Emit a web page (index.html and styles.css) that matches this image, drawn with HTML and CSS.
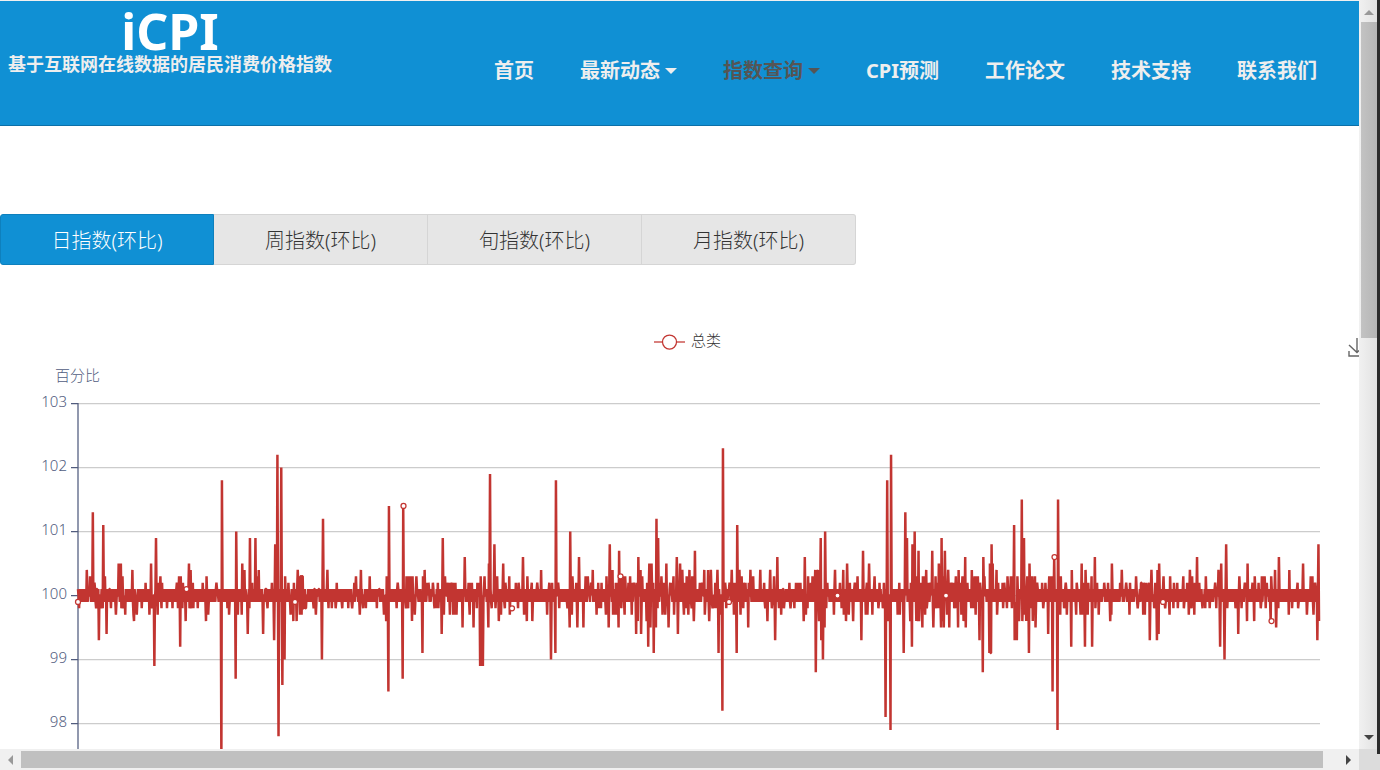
FILE: index.html
```html
<!DOCTYPE html>
<html lang="zh-CN">
<head>
<meta charset="utf-8">
<title>iCPI</title>
<link rel="stylesheet" href="styles.css">
</head>
<body>
<div class="window">
  <main class="page">
    <header class="header">
      <a class="brand" href="#">
        <span class="brand-name">iCPI</span>
        <span class="brand-caption">基于互联网在线数据的居民消费价格指数</span>
      </a>
      <nav class="nav">
        <a href="#">首页</a>
        <a href="#">最新动态<i class="caret"></i></a>
        <a class="current" href="#">指数查询<i class="caret"></i></a>
        <a href="#">CPI预测</a>
        <a href="#">工作论文</a>
        <a href="#">技术支持</a>
        <a href="#">联系我们</a>
      </nav>
    </header>
    <div class="tabs">
      <button class="tab active" type="button">日指数(环比)</button>
      <button class="tab" type="button">周指数(环比)</button>
      <button class="tab" type="button">旬指数(环比)</button>
      <button class="tab" type="button">月指数(环比)</button>
    </div>
    <svg class="chart" viewBox="0 265 1359 500">
      <g class="legend" stroke-width="1.25">
        <path d="M654 342H685"/>
        <circle cx="669.500" cy="342" r="7"/>
        <text x="691" y="346">总类</text>
      </g>
      <path class="download" stroke-width="1.4" d="M1357 338V352M1349 345L1357 352.500L1365 345M1349 351V356H1366V351"/>
      <text class="axis-text" x="55" y="381">百分比</text>
      <path class="grid" stroke-width="1.25" d="M78 403.500H1320M78 467.500H1320M78 531.500H1320M78 595.500H1320M78 659.500H1320M78 723.500H1320"/>
      <path class="axis" stroke-width="1.25" d="M78 403V765M71 403.500H78M71 467.500H78M71 531.500H78M71 595.500H78M71 659.500H78M71 723.500H78"/>
      <g class="axis-text end">
        <text x="67" y="407">103</text>
        <text x="67" y="471">102</text>
        <text x="67" y="535">101</text>
        <text x="67" y="599">100</text>
        <text x="67" y="663">99</text>
        <text x="67" y="727">98</text>
      </g>
      <path class="series" id="series" stroke-width="2.5"/>
      <g class="markers" id="markers" stroke-width="1.25"></g>
    </svg>
  </main>
  <div class="vbar">
    <i class="arrow up"></i>
    <i class="vthumb"></i>
    <i class="arrow down"></i>
  </div>
  <div class="hbar">
    <i class="arrow left"></i>
    <i class="hthumb"></i>
    <i class="arrow right"></i>
  </div>
  <div class="edge"></div>
</div>
<script src="chart.js"></script>
</body>
</html>
```
FILE: styles.css
```css
* {
  box-sizing: border-box;
}

body {
  margin: 0;
  font-family: "Noto Sans", "Noto Sans CJK SC", sans-serif;
  background: #fff;
}

.window {
  display: grid;
  grid-template-columns: minmax(0, 1fr) 18px 3px;
  grid-template-rows: minmax(0, 1fr) 21px;
  height: 100vh;
  overflow: hidden;
  background: #dcdcdc;
}

.page {
  overflow: hidden;
  background: #fff;
  border-top: 1px solid #f0f0f0;
}

.header {
  display: flex;
  justify-content: space-between;
  height: 125px;
  padding: 0 42px 0 8px;
  background: #1090d4;
  border-bottom: 1px solid #0c70a8;
}

.header a {
  color: #eee;
  font-weight: 700;
  text-decoration: none;
}

.brand {
  display: flex;
  flex-direction: column;
  align-items: center;
  padding-top: 8px;
}

.brand .brand-name {
  color: #fff;
  font-size: 50px;
  line-height: 44px;
}

.brand-caption {
  font-size: 18px;
  line-height: 22px;
}

.nav {
  display: flex;
  align-items: flex-start;
  gap: 46px;
  padding-top: 55px;
}

.nav a {
  display: flex;
  align-items: center;
  font-size: 20px;
  line-height: 30px;
  white-space: nowrap;
}

.nav .current {
  color: #555;
}

.caret {
  margin-left: 5px;
  border: 6px solid transparent;
  border-top-color: currentColor;
  border-bottom: 0;
}

.tabs {
  display: grid;
  grid-template-columns: repeat(4, 1fr);
  width: 63%;
  margin-top: 88px;
}

.tab {
  height: 51px;
  padding: 0;
  font: inherit;
  font-size: 20px;
  font-weight: 300;
  color: #333;
  background: #e6e6e6;
  border: 1px solid #d5d5d5;
  border-left-width: 0;
}

.tab:last-child {
  border-radius: 0 3px 3px 0;
}

.tab.active {
  color: #fff;
  background: #1090d4;
  border: 1px solid #0e80bd;
  border-radius: 3px 0 0 3px;
}

.chart {
  display: block;
  width: 100%;
  font-size: 15px;
}

.legend path,
.legend circle {
  fill: #fff;
  stroke: #c23531;
}

.legend text {
  fill: #333;
}

.download {
  fill: none;
  stroke: #666;
}

.axis-text {
  fill: #515c7e;
}

.chart text {
  font-weight: 300;
}

.end {
  text-anchor: end;
}

.grid {
  stroke: #ccc;
}

.axis {
  fill: none;
  stroke: #515c7e;
}

.series {
  fill: none;
  stroke: #c23531;
  stroke-linejoin: bevel;
}

.markers circle {
  fill: #fff;
  stroke: #c23531;
}

.vbar,
.hbar {
  display: flex;
  align-items: center;
  background: #f0f0f0;
}

.vbar {
  flex-direction: column;
  padding: 10px 0 9px 2px;
  background: linear-gradient(90deg, #f1f1f1, #e2e2e2);
}

.vthumb {
  width: 16px;
  flex: 0 0 316px;
  margin: 7px 0 auto;
  background: linear-gradient(90deg, #c3c3c3, #b5b5b5);
}

.hbar {
  grid-row: 2;
  grid-column: 1;
  padding: 0 8px;
}

.hthumb {
  height: 17px;
  flex: 1;
  margin: 0 23px 0 8px;
  background: #c0c0c0;
}

.arrow {
  border: 5px solid transparent;
}

.up {
  border-top: 0;
  border-bottom-color: #999;
}

.down {
  border-bottom: 0;
  border-top-color: #444;
}

.left {
  border-left: 0;
  border-right-color: #999;
}

.right {
  border-right: 0;
  border-left-color: #444;
}

.edge {
  grid-row: 1 / 3;
  grid-column: 3;
  margin-bottom: 16px;
  background: #2b2b2b;
}
```
FILE: chart.js
```js
// Daily index. Pairs are "position:deviation": position in thirds of a unit
// from the segment's origin, deviation from 100 in tenths.
const segments = [
  {origin: 0,
   high: "234:1 261:4 270:3 278:13 284:2 290:1 309:11 314:3 322:1 329:1 335:1 356:5 362:5 367:3 397:4 404:1 421:1 436:2 446:1 454:5 468:9 475:2 481:3 486:2 499:1 510:1 530:2 537:3 543:3 549:2 558:1 567:5 572:4 579:2 595:1 608:2 619:3 632:1 650:2 666:18 685:1 700:1 708:10 715:1 726:5 734:4 750:9 757:2 767:9 772:3 777:4 797:1 815:2 826:8 832:22 843:20 856:3 865:2 882:2 894:4 901:3 907:3",
   low: "238:2 248:1 260:1 288:2 296:7 301:2 308:2 320:6 333:2 347:3 365:2 370:2 376:3 392:1 400:3 404:4 411:3 426:2 449:3 456:2 463:11 473:3 486:2 501:2 517:2 534:2 543:8 549:2 557:4 569:2 575:2 580:2 595:2 620:4 625:3 640:1 664:26 683:2 688:3 707:13 714:3 725:3 744:6 749:2 765:1 790:6 803:2 822:7 836:22 847:14 853:10 871:3 880:4 890:4 905:3 912:2 918:2"},
  {origin: 300,
   high: "4:3 8:3 15:1 42:1 56:1 69:12 83:4 90:1 110:2 163:2 168:3 182:4 203:1 209:3 237:1 260:3 267:14 293:2 309:14 319:3 326:3 333:3 338:3 349:3 361:1 369:3 374:4 382:2 386:2 399:2 413:2 429:9 435:3 441:2 446:2 452:2 458:2 463:2 467:2 480:1 495:6 505:2 511:2 516:2 532:2 537:2 542:3 553:3 567:5 570:19 584:8 591:3 609:5 616:2 627:3 648:2 656:2 669:6 682:3 695:2 711:2 724:4 748:2 757:2 768:18 775:2 793:1 811:10 817:3 828:2 837:6 856:3 863:3 873:2 878:4 895:2",
   low: "4:3 10:2 16:2 42:2 48:3 65:10 86:2 95:2 107:2 127:2 145:2 156:2 179:3 190:2 197:2 231:2 252:3 261:4 265:15 290:2 308:13 318:2 324:2 338:4 345:3 367:9 403:2 409:2 415:2 425:6 432:3 452:3 460:3 465:3 469:3 487:5 510:3 520:5 531:2 542:11 545:11 548:11 566:5 575:2 586:2 597:4 603:3 614:2 630:3 655:2 673:3 681:4 697:4 741:3 753:10 767:9 777:2 803:2 809:5 817:3 832:5 850:5 889:3 896:2"},
  {origin: 590,
   high: "35:2 49:3 60:8 67:4 77:2 82:2 87:7 96:3 101:3 106:3 115:2 121:3 127:2 132:2 140:2 145:6 152:4 157:3 172:2 178:5 184:5 190:2 199:12 204:9 210:2 215:3 222:2 229:5 240:2 244:2 250:3 260:6 270:5 277:4 284:2 290:3 299:4 306:3 315:7 330:2 336:2 342:4 355:4 363:4 375:2 383:4 399:23 406:2 418:2 426:4 433:2 442:11 449:4 455:3 461:2 467:2 476:2 482:4 490:3 511:4 522:2 540:4 552:3 562:6 580:1 599:2 618:2 624:2 631:2 644:6 655:3 662:2 668:3 676:4 680:4 684:4 692:9 705:10 712:2 735:4 750:2 760:4 772:5 779:2 795:2 803:3 819:7 830:2 837:5 854:3 868:2 881:2 891:18",
   low: "33:2 50:3 56:5 69:3 72:3 76:3 80:3 88:5 95:2 104:3 125:3 138:6 145:4 154:6 169:4 175:8 181:5 191:9 198:5 204:2 218:3 225:3 236:5 252:3 264:6 283:3 289:2 295:3 305:2 312:4 344:3 357:4 368:2 374:2 379:2 385:9 391:3 398:18 409:2 434:3 441:9 451:3 460:2 475:5 526:2 533:4 546:2 556:7 567:2 574:3 582:2 602:2 613:2 641:4 647:3 654:2 677:12 688:4 694:7 698:10 703:5 708:2 731:3 754:2 762:3 768:4 776:3 789:4 814:7 827:3 833:3 847:3 865:2 878:2 887:19"},
  {origin: 860,
   high: "93:22 118:2 136:13 141:9 152:2 157:8 164:10 170:3 176:7 182:2 189:3 193:3 198:4 205:2 211:2 217:7 226:3 232:2 237:5 244:9 250:3 255:7 264:4 269:2 274:2 281:2 287:3 296:4 302:2 308:3 315:6 322:2 336:4 344:3 348:3 353:3 360:2 370:6 374:3 390:5 394:8 398:5 410:4 415:2 427:2 432:2 442:3 453:3 458:3 463:11 472:3 486:15 492:9 502:3 508:5 513:3 517:3 525:3 531:2 547:2 556:2 567:3 575:3 583:6 594:15 602:3 617:2 635:4 650:2 665:5 672:2 677:4 685:2 695:3 705:6 712:2 733:2 744:2 755:5 780:2 786:4 798:2 810:2 828:3 845:2 851:2 856:2",
   low: "85:4 92:21 113:3 120:3 131:9 151:4 158:8 170:4 174:4 178:4 188:5 195:3 201:2 220:5 226:2 231:2 237:2 243:5 247:4 251:5 262:3 268:5 283:2 290:2 295:5 304:3 311:4 317:5 335:2 340:2 348:3 358:7 369:12 388:9 391:9 394:9 411:3 429:2 441:2 455:2 464:7 468:7 471:7 477:4 487:4 493:3 499:4 506:9 513:2 519:4 526:5 550:2 564:6 578:15 592:21 600:3 612:2 620:3 635:8 648:3 662:3 667:3 671:3 675:8 680:3 685:3 696:8 707:2 716:3 750:4 755:3 810:3 833:2 849:3 856:3"},
  {origin: 1080,
   high: "184:2 190:2 200:2 208:2 214:4 226:2 232:4 238:5 251:3 271:3 282:2 291:2 310:3 322:2 330:4 337:3 344:2 351:6 358:2 378:3 405:2 416:4 424:5 438:8 447:1 478:3 495:2 503:5 517:2 524:3 535:2 546:3 550:3 554:3 560:2 573:3 585:4 596:6 628:4 652:2 669:5 692:3 698:3 706:2 716:8",
   low: "210:7 222:2 231:7 236:6 255:2 271:3 280:2 293:2 311:2 327:3 335:2 345:3 368:2 378:2 389:2 409:2 421:8 434:10 441:2 466:2 475:6 484:2 502:4 522:4 543:2 557:2 574:4 589:5 595:2 626:3 636:2 655:2 680:3 701:3 712:7 718:4"}
];

const left = 78, right = 1319, days = 2260;
const step = (right - left) / (days - 1);
const toY = tenths => (595.5 - tenths * 6.4).toFixed(1);

const values = [];
for (let i = 0; i < days; i++) {
  const quiet = (i * 7919) % 13 < 4;
  values.push(quiet ? 0 : (i % 2 ? 1 : -1));
}

const used = new Set();
function place(list, origin, sign) {
  for (const pair of list.split(" ")) {
    const [position, size] = pair.split(":").map(Number);
    let day = Math.round((origin + position / 3 - left) / step);
    day = Math.max(0, Math.min(days - 1, day));
    while (used.has(day) && day > 0) day--;
    used.add(day);
    values[day] = sign * size;
  }
}
for (const s of segments) {
  place(s.high, s.origin, 1);
  place(s.low, s.origin, -1);
}

document.getElementById("series").setAttribute("d",
  "M" + values.map((v, i) => (left + i * step).toFixed(2) + " " + toY(v)).join("L"));

const marked = [-1, 1, -1, 14, -2, 3, -1, 0, 0, 6, -1, -4];
document.getElementById("markers").innerHTML = marked.map((v, i) =>
  `<circle cx="${left + i * 108.5}" cy="${toY(v)}" r="2.5"/>`).join("");
```
